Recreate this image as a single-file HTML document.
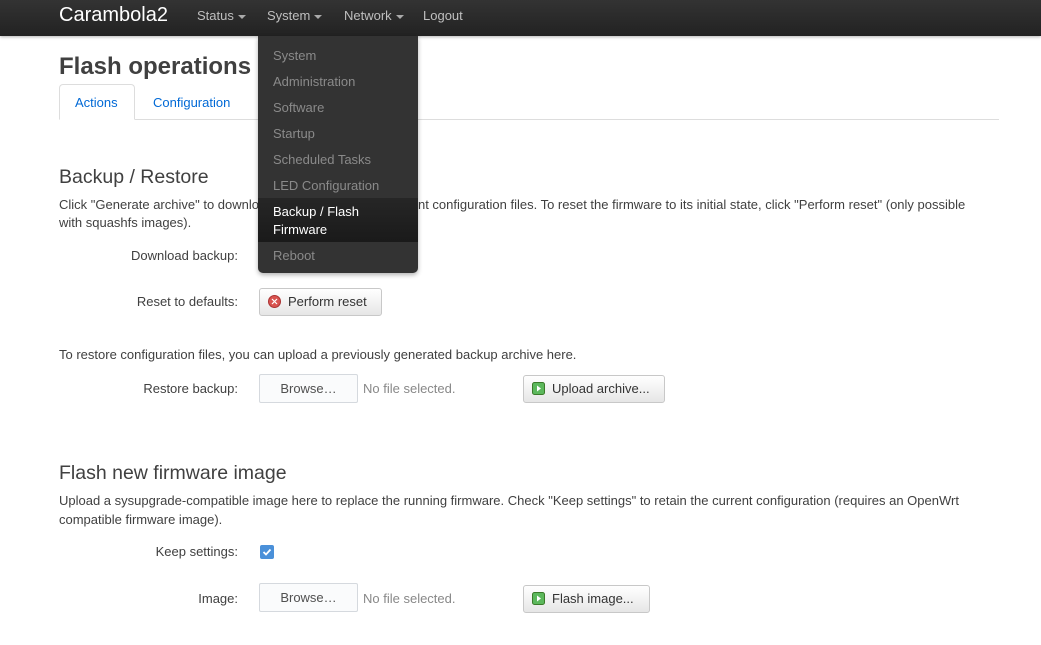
<!DOCTYPE html>
<html><head><meta charset="utf-8"><style>
*{margin:0;padding:0;box-sizing:border-box}
body{width:1041px;height:645px;overflow:hidden;background:#fff;font-family:"Liberation Sans",sans-serif;font-size:13px;color:#404040;position:relative}
.a{position:absolute;white-space:nowrap}
.nav{position:absolute;left:0;top:0;width:1041px;height:36px;background:linear-gradient(#333,#222);box-shadow:0 1px 3px rgba(0,0,0,.3)}
.nav .a{color:#bfbfbf;font-size:13px;top:8px}
.car{display:inline-block;border-left:4px solid transparent;border-right:4px solid transparent;border-top:4px solid #aaa;vertical-align:middle;margin-left:4px}
.dd{position:absolute;left:258px;top:36px;width:160px;height:237px;background:#333;border-radius:0 0 5px 5px;box-shadow:0 2px 5px rgba(0,0,0,.3)}
.dd .a{color:#8a8a8a;left:15px}
.btn{position:absolute;height:28px;border:1px solid #c8c8c8;border-radius:3px;background:linear-gradient(#fff,#e6e6e6);color:#333;font-size:13px;line-height:26px;padding-left:28px}
.brw{position:absolute;width:99px;height:29px;border:1px solid #d5d9de;border-radius:2px;background:#fafbfc;color:#505050;text-align:center;line-height:27px}
.ic{position:absolute;left:8px;top:6px;width:13px;height:13px}
h2{position:absolute;font-size:19.5px;font-weight:normal;color:#404040;left:59px}
.lb{position:absolute;right:803px;color:#404040}
.ns{position:absolute;left:363px;color:#888}
</style></head><body>
<div class="nav">
<div class="a" style="left:59px;top:4px;font-size:20px;color:#fff">Carambola2</div>
<div class="a" style="left:197px">Status<span class="car"></span></div>
<div class="a" style="left:267px">System<span class="car"></span></div>
<div class="a" style="left:344px">Network<span class="car"></span></div>
<div class="a" style="left:423px">Logout</div>
</div>
<div class="a" style="left:59px;top:53px;font-size:24px;font-weight:bold;color:#404040">Flash operations</div>
<div style="position:absolute;left:59px;top:119px;width:940px;height:1px;background:#ddd"></div>
<div style="position:absolute;left:59px;top:84px;width:76px;height:36px;border:1px solid #ddd;border-bottom-color:#fff;border-radius:4px 4px 0 0;background:#fff"></div>
<div class="a" style="left:75px;top:95px;color:#0069d6">Actions</div>
<div class="a" style="left:153px;top:95px;color:#0069d6">Configuration</div>

<h2 style="top:166px">Backup / Restore</h2>
<div class="a" style="left:59px;top:196px;line-height:18px;white-space:normal;width:925px">Click "Generate archive" to download a tar archive of the current configuration files. To reset the firmware to its initial state, click "Perform reset" (only possible with squashfs images).</div>
<div class="lb" style="top:248px">Download backup:</div>
<div class="lb" style="top:294px">Reset to defaults:</div>
<div class="btn" style="left:259px;top:288px;width:123px"><svg class="ic" viewBox="0 0 13 13"><circle cx="6.5" cy="6.5" r="6" fill="#d9534f" stroke="#a33"/><path d="M4 4l5 5M9 4l-5 5" stroke="#fff" stroke-width="1.2"/></svg>Perform reset</div>
<div class="a" style="left:59px;top:347px">To restore configuration files, you can upload a previously generated backup archive here.</div>
<div class="lb" style="top:381px">Restore backup:</div>
<div class="brw" style="left:259px;top:374px">Browse…</div>
<div class="ns" style="top:381px">No file selected.</div>
<div class="btn" style="left:523px;top:375px;width:142px"><svg class="ic" viewBox="0 0 13 13"><rect x=".5" y=".5" width="12" height="12" rx="2" fill="#5cb85c" stroke="#3a7a2a"/><path d="M5 3.5l4 3-4 3z" fill="#fff"/></svg>Upload archive...</div>

<h2 style="top:462px">Flash new firmware image</h2>
<div class="a" style="left:59px;top:491px;line-height:19px;white-space:normal;width:925px">Upload a sysupgrade-compatible image here to replace the running firmware. Check "Keep settings" to retain the current configuration (requires an OpenWrt compatible firmware image).</div>
<div class="lb" style="top:544px">Keep settings:</div>
<div style="position:absolute;left:260px;top:545px;width:14px;height:14px;background:#4a90d9;border-radius:2px"><svg width="14" height="14" viewBox="0 0 14 14"><path d="M3.5 7l2.5 2.5 4.5-5" stroke="#fff" stroke-width="1.8" fill="none"/></svg></div>
<div class="lb" style="top:591px">Image:</div>
<div class="brw" style="left:259px;top:583px">Browse…</div>
<div class="ns" style="top:591px">No file selected.</div>
<div class="btn" style="left:523px;top:585px;width:127px"><svg class="ic" viewBox="0 0 13 13"><rect x=".5" y=".5" width="12" height="12" rx="2" fill="#5cb85c" stroke="#3a7a2a"/><path d="M5 3.5l4 3-4 3z" fill="#fff"/></svg>Flash image...</div>

<div class="dd">
<div class="a" style="top:12px">System</div>
<div class="a" style="top:38px">Administration</div>
<div class="a" style="top:64px">Software</div>
<div class="a" style="top:90px">Startup</div>
<div class="a" style="top:116px">Scheduled Tasks</div>
<div class="a" style="top:142px">LED Configuration</div>
<div style="position:absolute;left:0;top:162px;width:160px;height:44px;background:linear-gradient(#262626,#1a1a1a)"></div>
<div class="a" style="top:167px;color:#fff;line-height:18px">Backup / Flash<br>Firmware</div>
<div class="a" style="top:212px">Reboot</div>
</div>
</body></html>
